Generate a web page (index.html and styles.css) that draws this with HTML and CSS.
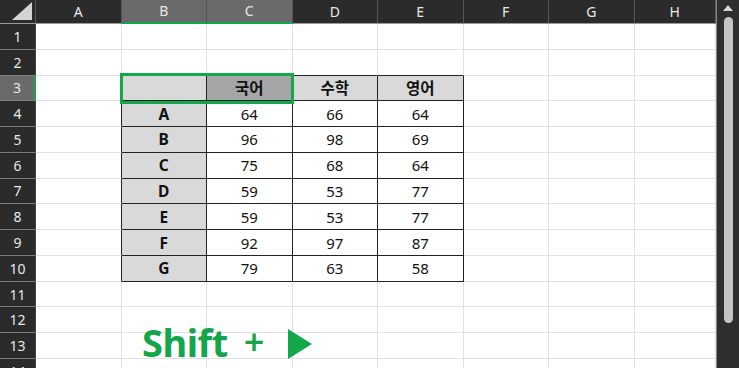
FILE: index.html
```html
<!DOCTYPE html>
<html lang="ko">
<head>
    <meta charset="UTF-8">
    <meta name="viewport" content="width=device-width, initial-scale=1.0">
    <title>성적표</title>
    <link rel="stylesheet" href="styles.css">
</head>
<body>
    <div class="workbook">
        <table class="sheet">
            <colgroup>
                <col class="col-rh">
                <col class="col-cell" span="7">
                <col class="col-last">
            </colgroup>
            <thead>
                <tr>
                    <th class="corner"><span class="corner-mark"></span></th>
                    <th>A</th><th class="sel">B</th><th class="sel">C</th><th>D</th><th>E</th><th>F</th><th>G</th><th>H</th>
                </tr>
            </thead>
            <tbody>
                <tr><th>1</th><td></td><td></td><td></td><td></td><td></td><td></td><td></td><td></td></tr>
                <tr><th>2</th><td></td><td class="t"></td><td class="t"></td><td class="t"></td><td class="t"></td><td></td><td></td><td></td></tr>
                <tr><th class="sel">3</th><td class="l"></td><td class="d g"></td><td class="d g2 b">국어</td><td class="d g b">수학</td><td class="d g b">영어</td><td></td><td></td><td></td></tr>
                <tr><th>4</th><td class="l"></td><td class="d g b">A</td><td class="d">64</td><td class="d">66</td><td class="d">64</td><td></td><td></td><td></td></tr>
                <tr><th>5</th><td class="l"></td><td class="d g b">B</td><td class="d">96</td><td class="d">98</td><td class="d">69</td><td></td><td></td><td></td></tr>
                <tr><th>6</th><td class="l"></td><td class="d g b">C</td><td class="d">75</td><td class="d">68</td><td class="d">64</td><td></td><td></td><td></td></tr>
                <tr><th>7</th><td class="l"></td><td class="d g b">D</td><td class="d">59</td><td class="d">53</td><td class="d">77</td><td></td><td></td><td></td></tr>
                <tr><th>8</th><td class="l"></td><td class="d g b">E</td><td class="d">59</td><td class="d">53</td><td class="d">77</td><td></td><td></td><td></td></tr>
                <tr><th>9</th><td class="l"></td><td class="d g b">F</td><td class="d">92</td><td class="d">97</td><td class="d">87</td><td></td><td></td><td></td></tr>
                <tr><th>10</th><td class="l"></td><td class="d g b">G</td><td class="d">79</td><td class="d">63</td><td class="d">58</td><td></td><td></td><td></td></tr>
                <tr><th>11</th><td></td><td></td><td></td><td></td><td></td><td></td><td></td><td></td></tr>
                <tr><th>12</th><td></td><td></td><td></td><td></td><td></td><td></td><td></td><td></td></tr>
                <tr><th>13</th><td></td><td></td><td></td><td></td><td></td><td></td><td></td><td></td></tr>
                <tr><th>14</th><td></td><td></td><td></td><td></td><td></td><td></td><td></td><td></td></tr>
            </tbody>
        </table>

        <div class="scrollbar">
            <span class="scroll-arrow"></span>
            <span class="scroll-thumb"></span>
        </div>

        <!-- active range B3:C3 -->
        <div class="selection"></div>

        <p class="hint">Shift <span class="plus">+</span>
            <svg class="hint-arrow" width="24" height="30" viewBox="0 0 24 30"><polygon points="0,0 24,15 0,30" fill="currentColor"/></svg>
        </p>
    </div>
</body>
</html>
```

FILE: styles.css
```css
:root {
    --head: #2b2b2b;
    --head-sel: #6a6a6a;
    --grid: #e1e1e1;
    --green: #13a64b;
    --fill: #d9d9d9;
    --fill-dark: #a6a6a6;
}

* {
    margin: 0;
    padding: 0;
    box-sizing: border-box;
}

body {
    width: 739px;
    height: 368px;
    overflow: hidden;
    background: #fff;
    font-family: 'Noto Sans', 'Noto Sans CJK KR', sans-serif;
}

.workbook {
    position: relative;
    display: flex;
    width: 739px;
    height: 368px;
    overflow: hidden;
}

.sheet {
    width: 716px;
    flex: none;
    table-layout: fixed;
    border-collapse: separate;
    border-spacing: 0;
}

.col-rh { width: 36px; }
.col-cell { width: 85.5px; }
.col-last { width: 81.5px; }

/* column & row headers */
.sheet th {
    background: var(--head);
    color: #e8e8e8;
    font-size: 14px;
    font-weight: 400;
    text-align: center;
    padding: 0;
    line-height: 16px;
}

.sheet thead tr {
    height: 24px;
}

.sheet thead th {
    border-right: 1px solid #555;
    border-bottom: 1px solid #9a9a9a;
}

.sheet thead th.sel {
    background: var(--head-sel);
    border-bottom: 2px solid var(--green);
}

.sheet tbody th {
    border-right: 1px solid #444;
    border-bottom: 1px solid #7c7c7c;
    padding-top: 1px;
}

.sheet tbody th.sel {
    background: var(--head-sel);
    border-right: 2px solid var(--green);
}

.corner {
    position: relative;
}

.corner-mark {
    position: absolute;
    right: 3px;
    bottom: 3px;
    width: 0;
    height: 0;
    border-left: 20px solid transparent;
    border-bottom: 18px solid #d4d4d4;
}

.sheet tbody tr {
    height: 25.77px;
}

.sheet td {
    border-right: 1px solid var(--grid);
    border-bottom: 1px solid var(--grid);
    text-align: center;
    font-size: 15px;
    line-height: 18px;
    color: #111;
    padding: 0;
}

/* bordered score block B3:E10 */
.sheet td.t { border-bottom-color: #222; }
.sheet td.l { border-right-color: #222; }
.sheet td.d {
    border-right-color: #222;
    border-bottom-color: #222;
}
.sheet td.g { background: var(--fill); }
.sheet td.g2 { background: var(--fill-dark); }
.sheet td.b { font-weight: 700; font-size: 15.5px; }

.scrollbar {
    flex: 1;
    display: flex;
    flex-direction: column;
    align-items: center;
    background: #2e2e2e;
    border-left: 1px solid #8a8a8a;
    padding-top: 5px;
}

.scroll-arrow {
    width: 0;
    height: 0;
    border-left: 5px solid transparent;
    border-right: 5px solid transparent;
    border-bottom: 6px solid #d6d6d6;
}

.scroll-thumb {
    width: 9px;
    height: 306px;
    margin-top: 6px;
    border-radius: 5px;
    background: #c4c4c4;
}

.selection {
    position: absolute;
    left: 120px;
    top: 73px;
    width: 174px;
    height: 31px;
    border: 3px solid var(--green);
    pointer-events: none;
}

.hint {
    position: absolute;
    left: 142px;
    top: 318px;
    display: flex;
    align-items: center;
    color: var(--green);
    font-size: 38px;
    font-weight: 700;
    line-height: 48px;
    letter-spacing: -0.5px;
    white-space: nowrap;
}

.plus {
    margin-left: 16px;
    font-size: 36px;
    font-weight: 600;
}

.hint-arrow {
    margin-left: 24px;
    margin-top: 4px;
}
```
